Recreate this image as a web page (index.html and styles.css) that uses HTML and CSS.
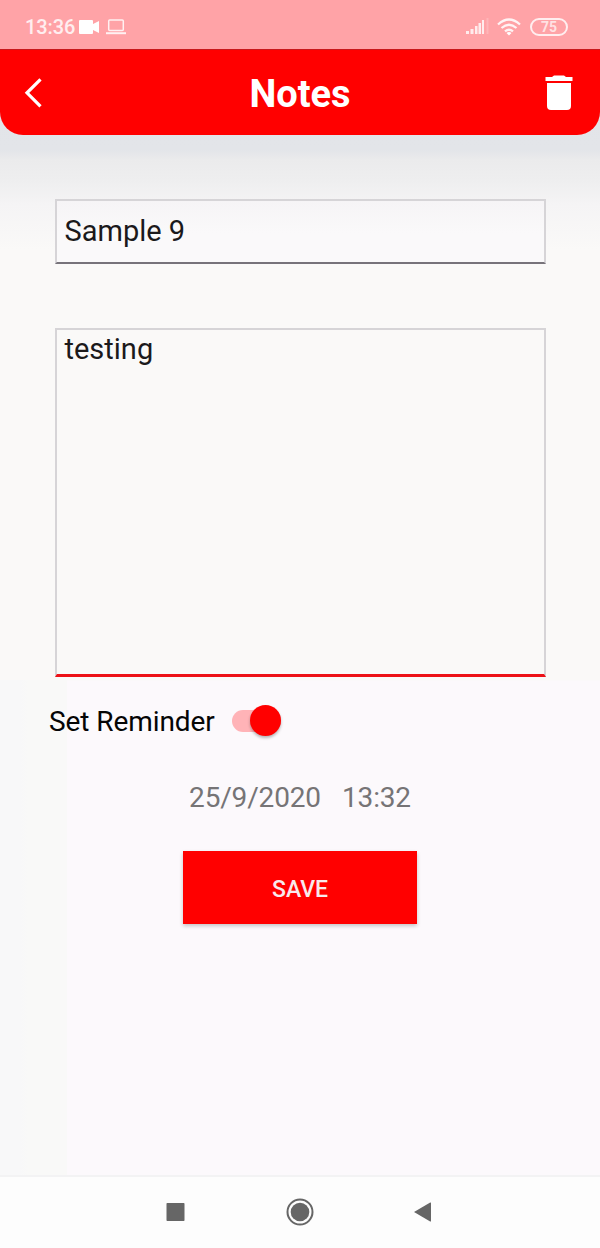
FILE: index.html
```html
<!DOCTYPE html>
<html lang="en">
<head>
<meta charset="utf-8">
<title>Notes</title>
<link rel="stylesheet" href="styles.css">
</head>
<body>
<div class="phone">
  <div class="status">
    <span class="clock">13:36</span>
    <svg class="camera" width="20" height="14" viewBox="0 0 20 14"><path d="M1 0h12q1 0 1 1v3l6-3v12l-6-3v3q0 1-1 1H1q-1 0-1-1V1q0-1 1-1z" fill="#fff"/></svg>
    <svg class="laptop" width="20" height="16" viewBox="0 0 20 16" fill="none" stroke="#fff" stroke-opacity=".85"><rect x="2.7" y="1" width="14.6" height="10.6" rx="1" stroke-width="1.5"/><path d="M0 14.2h20" stroke-width="2"/></svg>
    <svg class="signal" width="24" height="17" viewBox="0 0 24 17" fill="#fff"><g opacity=".8"><path d="M0 13h3v3H0zM4.500 11h3v5h-3zM9 8h2.500v8H9zM12.500 5h2.500v11h-2.500zM16 2h2v14h-2z"/><path d="M20.500 0h2v16h-2z" opacity=".25"/></g></svg>
    <svg class="wifi" width="24" height="18" viewBox="0 0 24 18" fill="none" stroke="#fff" stroke-opacity=".87" stroke-width="2.300"><path d="M1 6.500Q12-3.500 23 6.500M4.500 10Q12 3.500 19.500 10M8 13.400q4-3.400 8 0"/><path d="M9.500 15q2.500-2 5 0L12 17.500z" fill="#fff" stroke="none"/></svg>
    <span class="battery">75</span>
  </div>
  <header class="bar">
    <svg class="back" width="20" height="32" viewBox="0 0 20 32" fill="none" stroke="#fff" stroke-width="3.200"><path d="M17.500 2.300 4 15.800l13.500 13.500"/></svg>
    <h1 class="title">Notes</h1>
    <svg class="trash" width="28" height="36" viewBox="0 0 28 36" fill="#fff"><path d="M.5 2H7l2-1.500h10L21 2h6.500v4H.5zM2 8h24v23q0 4-4 4H6q-4 0-4-4z"/></svg>
  </header>
  <main class="content">
    <div class="field name">Sample 9</div>
    <div class="field note">testing</div>
    <div class="reminder"><span class="label">Set Reminder</span><span class="track"><span class="thumb"></span></span></div>
    <div class="when"><span>25/9/2020</span><span>13:32</span></div>
    <button class="save">SAVE</button>
  </main>
  <nav class="nav">
    <svg width="300" height="30" viewBox="0 0 300 30" fill="#666"><rect x="16.500" y="6" width="18" height="18" rx=".7"/><circle cx="150" cy="15" r="9.300"/><circle cx="150" cy="15" r="12.500" fill="none" stroke="#666" stroke-width="2"/><path d="M264 15 280.200 5.500q.8-.4.800.5v18q0 .9-.8.500z"/></svg>
  </nav>
</div>
</body>
</html>
```
FILE: styles.css
```css
* { box-sizing: border-box; }
body { margin: 0; font-family: Roboto, sans-serif; }
.phone { display: flex; flex-direction: column; width: 600px; height: 1248px; overflow: hidden;
  background: linear-gradient(#e1e3e7 0, #e3e5e9 150px, #ebebec 160px, #eeeeef 180px, #f5f4f5 205px, #faf9f8 250px); }
.status { height: 50px; flex: none; display: flex; align-items: center; padding: 4px 32px 0 25px; background: #ffa3a7; border-bottom: 1px solid #c8181c; color: #fff; }
.clock { width: 53px; font-size: 20px; font-weight: 500; opacity: .82; letter-spacing: -.1px; }
.camera { margin-left: 1px; }
.laptop { margin-left: 7px; }
.signal { margin-left: auto; }
.wifi { margin-left: 7px; }
.battery { width: 38px; height: 18px; margin-left: 9px; border: 2px solid rgba(255,255,255,.82); border-radius: 9px; font-size: 14px; font-weight: 700; line-height: 14px; text-align: center; color: rgba(255,255,255,.7); }
.bar { height: 85px; flex: none; display: flex; align-items: center; justify-content: space-between; padding: 0 27px 0 23px; background: #f00; border-radius: 0 0 23px 23px; }
.back { width: 32px; height: 32px; padding-right: 12px; }
.title { margin: 3px 0 0; font-size: 38px; line-height: 46px; font-weight: 700; color: #fff; }
.content { flex: 1; display: flex; flex-direction: column; align-items: center; padding-top: 64px;
  background: linear-gradient(90deg, #f8f8f9 0 20px, #f9f9f8 28px 67px, transparent 67px) 0 545px / 100% 496px no-repeat,
    linear-gradient(transparent 545px, #fcf9fc 546px); }
.field { width: 491px; flex: none; padding: 0 8px; border: 2px solid #d6d4d7; font-size: 29px; line-height: 34px; color: #1b191b; }
.name { height: 65px; padding-top: 13px; border-bottom-color: #77737a; background: linear-gradient(#f6f4f6, #faf9fa 32px); }
.note { height: 349px; margin-top: 64px; padding-top: 2px; border-bottom: 3px solid #ed1118; }
.reminder { width: 502px; height: 34px; margin-top: 27px; display: flex; align-items: center; font-size: 28px; color: #050505; }
.label { width: 166px; white-space: nowrap; letter-spacing: -.08px; }
.track { display: flex; align-items: center; justify-content: flex-end; width: 49px; height: 22px; margin: -1px 0 0 17px; border-radius: 11px; background: #ffb3b7; }
.thumb { width: 31px; height: 31px; flex: none; border-radius: 50%; background: #f00; box-shadow: 0 2px 3px rgba(0,0,0,.28); }
.when { display: flex; gap: 21px; margin-top: 43px; height: 34px; font-size: 28px; line-height: 34px; letter-spacing: -.15px; color: #767476; }
.save { width: 234px; height: 73px; margin-top: 36px; padding: 3px 0 0; border: 0; background: #f00; color: #f9e9ec; font: 500 23px Roboto, sans-serif; box-shadow: 0 2px 4px rgba(0,0,0,.22); }
.nav { height: 73px; flex: none; display: flex; align-items: center; justify-content: center; padding-bottom: 2px; border-top: 2px solid #f3f3f4; background: #fdfdfd; }
```
